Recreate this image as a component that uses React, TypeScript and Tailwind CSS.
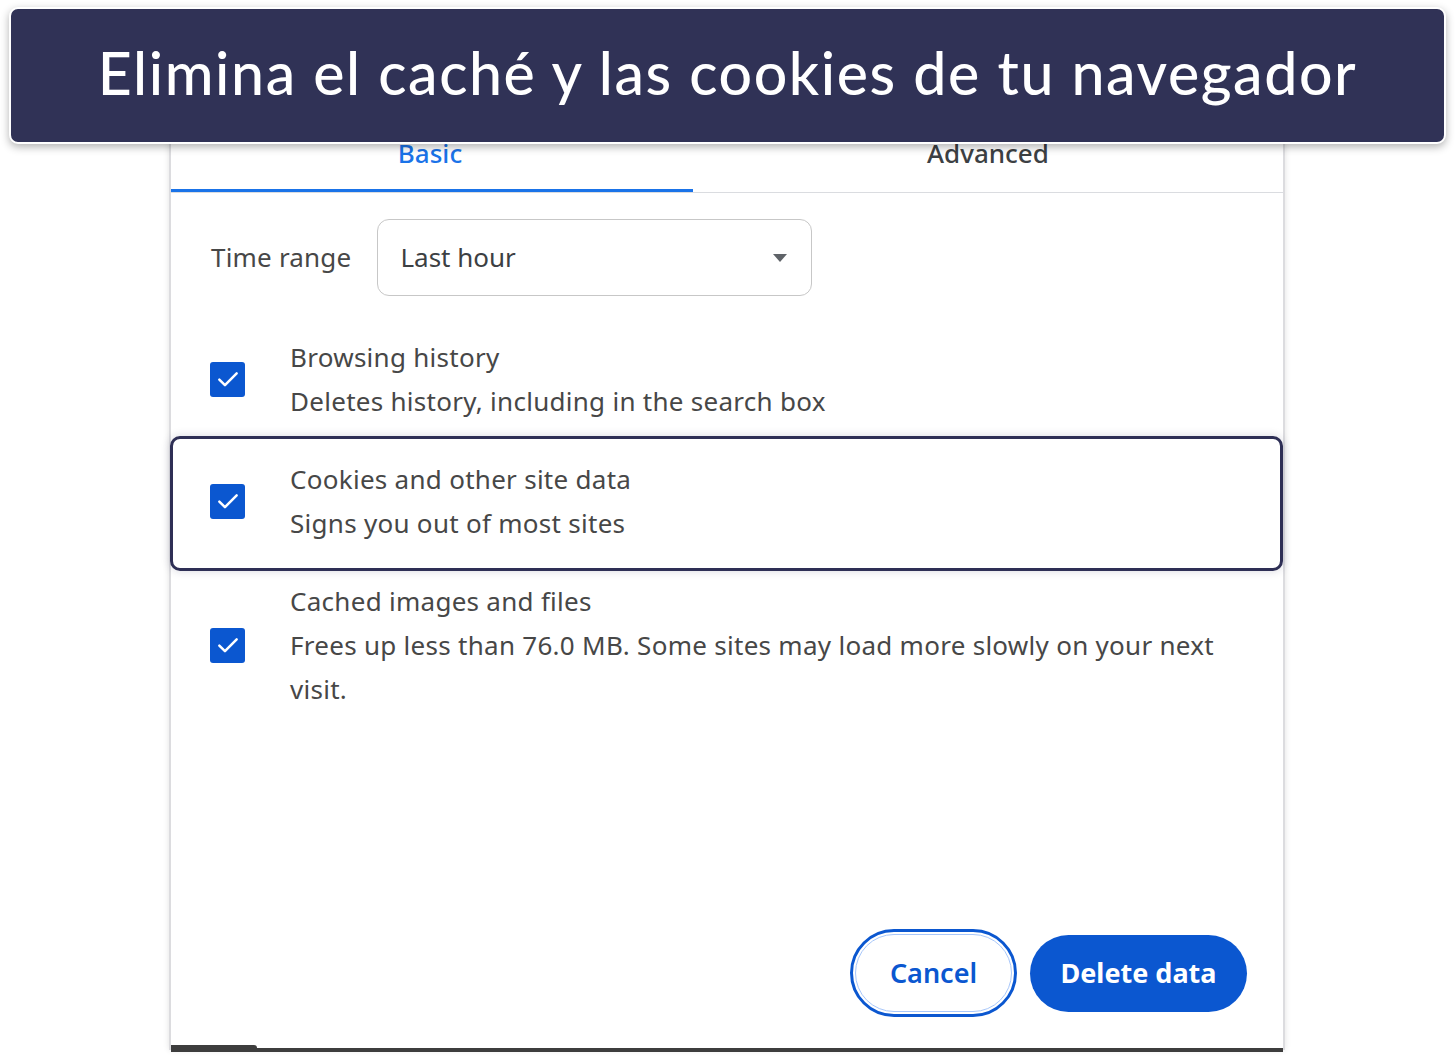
import React from 'react';

interface RowProps {
  title: string;
  lines: string[];
  highlighted?: boolean;
}

const Check: React.FC = () => (
  <div className="w-[35px] h-[35px] shrink-0 rounded-[3px] bg-[#0b57d0] flex items-center justify-center">
    <svg width="26" height="26" viewBox="0 0 24 24" fill="none">
      <path d="M4 12.5l5.2 5.2L20 6.8" stroke="white" strokeWidth="2.3" strokeLinecap="round" strokeLinejoin="round" />
    </svg>
  </div>
);

const OptionRow: React.FC<RowProps> = ({ title, lines, highlighted }) => {
  const body = (
    <div className="flex items-center pl-[39px]">
      <Check />
      <div className="ml-[45px] w-[955px] text-[26px] leading-[44px] tracking-[0.28px] text-[#474747]">
        <div>{title}</div>
        {lines.map((l) => (
          <div key={l}>{l}</div>
        ))}
      </div>
    </div>
  );

  if (highlighted) {
    return (
      <div className="mt-[13px] w-[1113px] border-[3px] border-[#2e2f55] rounded-[10px] pt-[18px] pb-[23px] -ml-[1px] shadow-[0_0_10px_rgba(40,40,80,0.18)]">
        <div className="-ml-[2px]">{body}</div>
      </div>
    );
  }
  return body;
};

export default function App() {
  return (
    <div
      className="relative w-[1455px] h-[1064px] bg-white overflow-hidden"
      style={{ fontFamily: '"Noto Sans", "Open Sans", sans-serif' }}
    >
      {/* dialog screenshot */}
      <div className="mt-[138px] ml-[169px] w-[1116px] h-[912px] bg-white border-x-2 border-[#dcdcdf] shadow-[0_0_6px_rgba(0,0,0,0.12)] flex flex-col relative">
        {/* tabs */}
        <div className="mt-[1px] flex border-b border-[#dadce0]">
          <div className="w-[522px] flex flex-col items-center">
            <span className="-ml-[4px] text-[26px] leading-[28px] font-medium text-[#1a73e8]">Basic</span>
            <div className="mt-[22px] h-[3px] w-full bg-[#1a73e8]" />
          </div>
          <div className="flex-1 flex flex-col items-center">
            <span className="text-[26px] leading-[28px] font-medium text-[#3c4043]">Advanced</span>
          </div>
        </div>

        {/* time range */}
        <div className="mt-[26px] flex items-center pl-[40px]">
          <span className="text-[26px] tracking-[0.2px] text-[#474747]">Time range</span>
          <div className="ml-[26px] w-[435px] h-[77px] rounded-[12px] border border-[#c7c7c7] flex items-center justify-between pl-[22px] pr-[24px]">
            <span className="text-[26px] text-[#3c4043]">Last hour</span>
            <svg width="14" height="8" viewBox="0 0 14 8">
              <path d="M0 0h14L7 8z" fill="#5f6368" />
            </svg>
          </div>
        </div>

        {/* options */}
        <div className="mt-[39px] flex flex-col">
          <OptionRow title="Browsing history" lines={['Deletes history, including in the search box']} />
          <OptionRow highlighted title="Cookies and other site data" lines={['Signs you out of most sites']} />
          <div className="mt-[8px]">
            <OptionRow
              title="Cached images and files"
              lines={['Frees up less than 76.0 MB. Some sites may load more slowly on your next', 'visit.']}
            />
          </div>
        </div>

        <div className="flex-1" />

        {/* buttons */}
        <div className="flex items-center justify-end gap-[18px] pr-[36px] pb-[38px]">
          <button className="w-[157px] h-[78px] rounded-full border border-[#a8c7fa] outline-3 outline-offset-2 outline-[#0b57d0] text-[27px] font-semibold text-[#0b57d0]">
            Cancel
          </button>
          <button className="w-[217px] h-[77px] rounded-full bg-[#0b57d0] text-[27px] font-bold text-white">
            Delete data
          </button>
        </div>

        {/* cut-off bottom edge of the screenshot */}
        <div className="absolute left-0 right-0 -bottom-[2px] h-[4px] bg-[#3d3d3d]" />
        <div className="absolute left-0 -bottom-[2px] w-[86px] h-[7px] bg-[#3d3d3d] rounded-tr-[3px]" />
      </div>

      {/* title banner */}
      <div className="absolute left-[9px] top-[7px] w-[1437px] h-[137px] rounded-[9px] border-2 border-white bg-[#303256] shadow-[0_3px_8px_rgba(0,0,0,0.3)] flex items-center justify-center pb-[4px]">
        <h1
          className="text-[59px] font-medium text-white tracking-[1.6px]"
          style={{ fontFamily: 'Lato, Inter, sans-serif' }}
        >
          Elimina el caché y las cookies de tu navegador
        </h1>
      </div>
    </div>
  );
}
